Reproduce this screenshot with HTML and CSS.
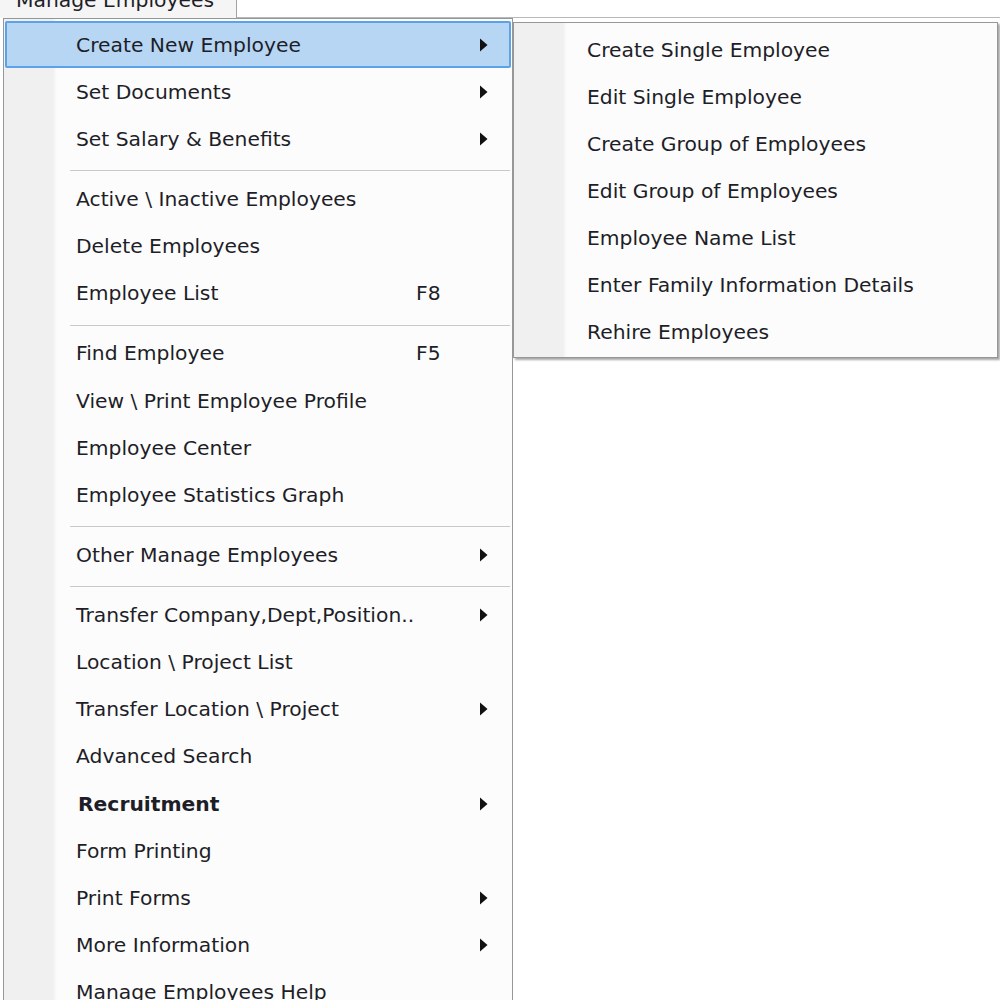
FILE: index.html
```html
<!DOCTYPE html>
<html lang="en">
<head>
    <meta charset="UTF-8">
    <title>Manage Employees</title>
    <link rel="stylesheet" href="styles.css">
</head>
<body>

<div class="tabbar">
    <div class="tab"><span>Manage Employees</span></div>
    <div class="tab-rest"></div>
</div>

<div class="menus">
    <div class="menu main">
        <div class="item active"><span class="label">Create New Employee</span><span class="key"></span><span class="arrow"><svg width="9" height="14" viewBox="0 0 9 14"><path d="M1 0.5 L8.5 7 L1 13.5 Z"/></svg></span></div>
        <div class="item"><span class="label">Set Documents</span><span class="key"></span><span class="arrow"><svg width="9" height="14" viewBox="0 0 9 14"><path d="M1 0.5 L8.5 7 L1 13.5 Z"/></svg></span></div>
        <div class="item"><span class="label">Set Salary &amp; Benefits</span><span class="key"></span><span class="arrow"><svg width="9" height="14" viewBox="0 0 9 14"><path d="M1 0.5 L8.5 7 L1 13.5 Z"/></svg></span></div>
        <div class="sep"></div>
        <div class="item"><span class="label">Active \ Inactive Employees</span></div>
        <div class="item"><span class="label">Delete Employees</span></div>
        <div class="item"><span class="label">Employee List</span><span class="key">F8</span><span class="arrow"></span></div>
        <div class="sep"></div>
        <div class="item"><span class="label">Find Employee</span><span class="key">F5</span><span class="arrow"></span></div>
        <div class="item"><span class="label">View \ Print Employee Profile</span></div>
        <div class="item"><span class="label">Employee Center</span></div>
        <div class="item"><span class="label">Employee Statistics Graph</span></div>
        <div class="sep"></div>
        <div class="item"><span class="label">Other Manage Employees</span><span class="key"></span><span class="arrow"><svg width="9" height="14" viewBox="0 0 9 14"><path d="M1 0.5 L8.5 7 L1 13.5 Z"/></svg></span></div>
        <div class="sep"></div>
        <div class="item"><span class="label">Transfer Company,Dept,Position..</span><span class="key"></span><span class="arrow"><svg width="9" height="14" viewBox="0 0 9 14"><path d="M1 0.5 L8.5 7 L1 13.5 Z"/></svg></span></div>
        <div class="item"><span class="label">Location \ Project List</span></div>
        <div class="item"><span class="label">Transfer Location \ Project</span><span class="key"></span><span class="arrow"><svg width="9" height="14" viewBox="0 0 9 14"><path d="M1 0.5 L8.5 7 L1 13.5 Z"/></svg></span></div>
        <div class="item"><span class="label">Advanced Search</span></div>
        <div class="item"><span class="label bold">Recruitment</span><span class="key"></span><span class="arrow"><svg width="9" height="14" viewBox="0 0 9 14"><path d="M1 0.5 L8.5 7 L1 13.5 Z"/></svg></span></div>
        <div class="item"><span class="label">Form Printing</span></div>
        <div class="item"><span class="label">Print Forms</span><span class="key"></span><span class="arrow"><svg width="9" height="14" viewBox="0 0 9 14"><path d="M1 0.5 L8.5 7 L1 13.5 Z"/></svg></span></div>
        <div class="item"><span class="label">More Information</span><span class="key"></span><span class="arrow"><svg width="9" height="14" viewBox="0 0 9 14"><path d="M1 0.5 L8.5 7 L1 13.5 Z"/></svg></span></div>
        <div class="item"><span class="label">Manage Employees Help</span></div>
    </div>

    <div class="menu sub">
        <div class="item"><span class="label">Create Single Employee</span></div>
        <div class="item"><span class="label">Edit Single Employee</span></div>
        <div class="item"><span class="label">Create Group of Employees</span></div>
        <div class="item"><span class="label">Edit Group of Employees</span></div>
        <div class="item"><span class="label">Employee Name List</span></div>
        <div class="item"><span class="label">Enter Family Information Details</span></div>
        <div class="item"><span class="label">Rehire Employees</span></div>
    </div>
</div>

</body>
</html>
```

FILE: styles.css
```css
body {
    margin: 0;
    background-color: #fff;
    font-family: 'DejaVu Sans', Verdana, sans-serif;
    font-size: 20.3px;
    color: #1e1e28;
    overflow: hidden;
    height: 1000px;
}

/* tab strip, mostly scrolled off the top */
.tabbar {
    display: flex;
    height: 18px;
}
.tab {
    width: 236px;
    height: 18px;
    background-color: #f5f5f5;
    border-right: 1px solid #a3a3a3;
    overflow: hidden;
}
.tab span {
    display: block;
    margin: -12px 0 0 16px;
    line-height: 24px;
    white-space: nowrap;
}
.tab-rest {
    flex: 1;
    border-bottom: 1px solid #b8b8b8;
    box-sizing: border-box;
}

.menus {
    display: flex;
    align-items: flex-start;
    padding-left: 3px;
}

.menu {
    box-sizing: border-box;
    border: 1px solid #979797;
    background: linear-gradient(to right, #f0f0f0 0, #f0f0f0 49px, #f7f7f7 51px, #fcfcfc 53px);
}
.main {
    width: 510px;
    padding-top: 2px;
    height: 1100px;
}
.sub {
    width: 485px;
    margin-top: 4px;
    padding: 3.5px 0 1.5px;
    box-shadow: 2px 2px 2px rgba(0, 0, 0, 0.35);
}

.item {
    display: flex;
    align-items: center;
    box-sizing: border-box;
    height: 47.2px;
    margin: 0 1px;
    border: 2px solid transparent;
    border-radius: 2px;
    padding: 0 21px 0 69px;
    white-space: nowrap;
}
.sub .item {
    height: 47px;
    padding-left: 70px;
}
.item.active {
    background-color: #b6d6f4;
    border-color: #5ba2e8;
}
.label {
    flex: 1;
}
.label.bold {
    font-weight: bold;
    padding-left: 2px;
}
.key {
    width: 63px;
}
.arrow {
    width: 9px;
    height: 14px;
    display: flex;
}
.arrow svg {
    fill: #111;
}

.sep {
    margin: 7.8px 2px 4px 66px;
    border-top: 1px solid #c9c9c9;
}
```
